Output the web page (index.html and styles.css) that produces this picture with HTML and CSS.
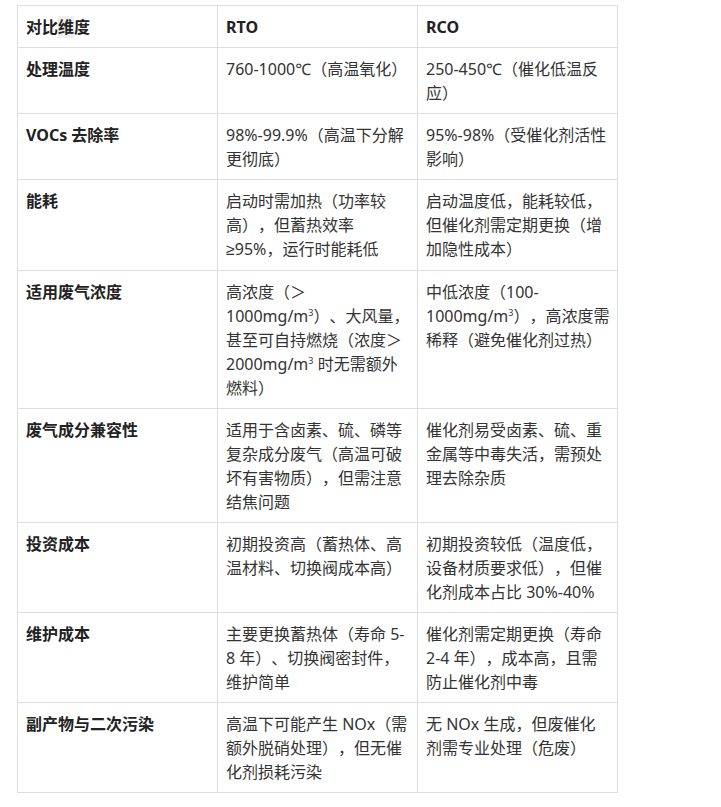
FILE: index.html
```html
<!DOCTYPE html>
<html lang="zh-CN">
<head>
<meta charset="utf-8">
<title>RTO 与 RCO 对比</title>
<link rel="stylesheet" href="styles.css">
</head>
<body>
<div class="page">
<table class="compare">
<colgroup><col class="c1"><col class="c2"><col class="c3"></colgroup>
<thead>
<tr><th>对比<span class="hl">维</span>度</th><th>RTO</th><th>RCO</th></tr>
</thead>
<tbody>
<tr><th>处理温度</th><td>760-1000℃（高温氧化）</td><td>250-450℃（催化低温反应）</td></tr>
<tr><th>VOCs 去除率</th><td>98%-99.9%（高温下分解更彻底）</td><td>95%-98%（受催化剂活性影响）</td></tr>
<tr><th>能耗</th><td>启动时需加热（功率较高），但蓄热效率<span class="sym">≥</span>95%，运行时能耗低</td><td>启动温度低，能耗较低，但催化剂需定期更换（增加隐性成本）</td></tr>
<tr><th>适用废气浓度</th><td>高浓度（＞1000mg/m<sup>3</sup>）、大风量，甚至可自持燃烧（浓度＞2000mg/m<sup>3</sup> 时无需额外燃料）</td><td>中低浓度（100-1000mg/m<sup>3</sup>），高浓度需稀释（避免催化剂过热）</td></tr>
<tr><th>废气成分兼容性</th><td>适用于含卤素、硫、磷等复杂成分废气（高温可破坏有害物质），但需注意结焦问题</td><td>催化剂易受卤素、硫、重金属等中毒失活，需预处理去除杂质</td></tr>
<tr><th>投资成本</th><td>初期投资高（蓄热体、高温材料、切换阀成本高）</td><td>初期投资较低（温度低，设备材质要求低），但催化剂成本占比 30%-40%</td></tr>
<tr><th>维护成本</th><td>主要更换蓄热体（寿命 5-8 年）、切换阀密封件，维护简单</td><td>催化剂需定期更换（寿命 2-4 年），成本高，且需防止催化剂中毒</td></tr>
<tr><th>副产物与二次污染</th><td>高温下可能产生 NOx（需额外脱硝处理），但无催化剂损耗污染</td><td>无 NOx 生成，但废催化剂需专业处理（危废）</td></tr>
</tbody>
</table>
</div>
</body>
</html>
```
FILE: styles.css
```css
html, body {
  margin: 0;
  padding: 0;
  background: #ffffff;
}
.page {
  padding: 5px 0 0 17px;
}
.compare {
  border-collapse: collapse;
  table-layout: fixed;
  width: 601px;
  font-family: "Noto Sans", "Noto Sans CJK SC", sans-serif;
  font-size: 16px;
  line-height: 24px;
  color: #333333;
  text-spacing-trim: space-all;
}
.compare col { width: 200px; }
.compare th,
.compare td {
  border: 1px solid #dedede;
  padding: 9px 7px 8px 8px;
  text-align: left;
  vertical-align: top;
  word-break: normal;
  overflow-wrap: break-word;
}
.compare th {
  font-weight: 700;
  color: #222222;
}
.compare sup {
  font-size: 9px;
  line-height: 0;
  vertical-align: 6px;
}
.sym {
  font-family: "Liberation Sans", sans-serif;
}
.hl {
  background: #eeeeee;
}
```
